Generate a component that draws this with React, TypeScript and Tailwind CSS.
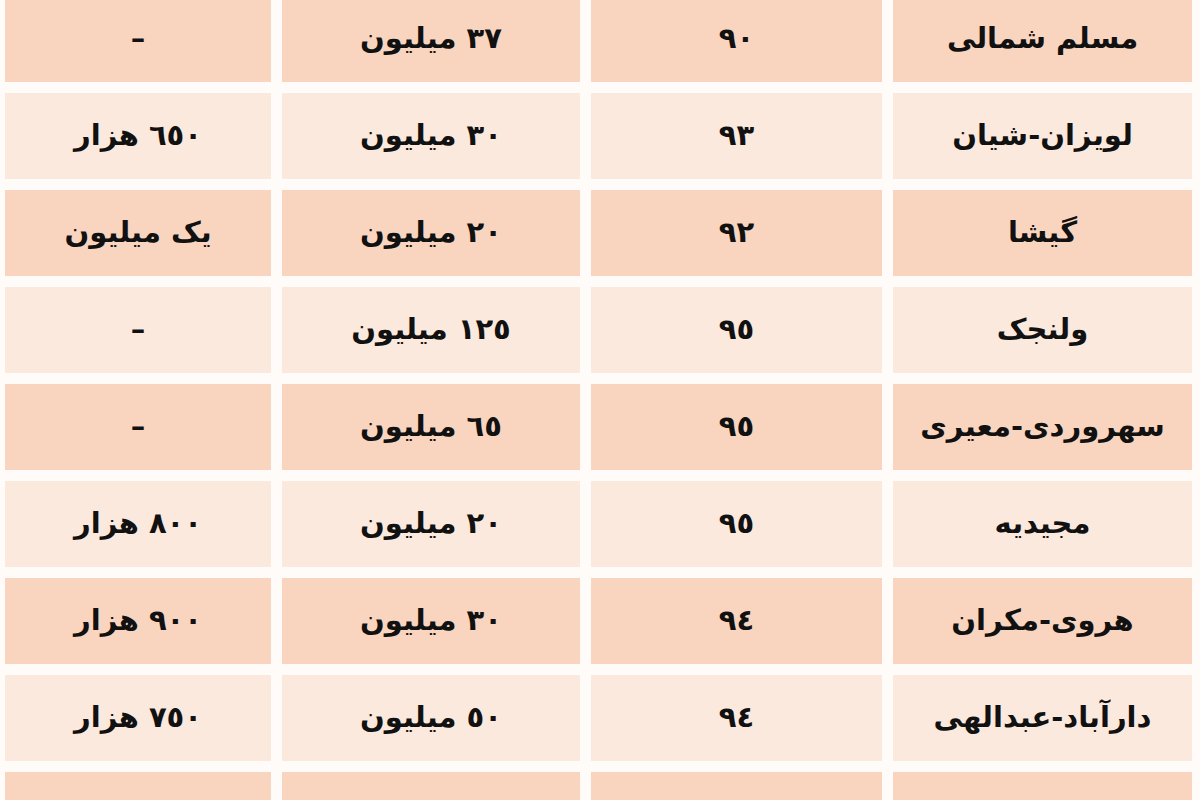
const rows: [string, string, string, string][] = [
  ["مسلم شمالی", "٩٠", "٣٧ میلیون", "–"],
  ["لویزان-شیان", "٩٣", "٣٠ میلیون", "٦٥٠ هزار"],
  ["گیشا", "٩٢", "٢٠ میلیون", "یک میلیون"],
  ["ولنجک", "٩٥", "١٢٥ میلیون", "–"],
  ["سهروردی-معیری", "٩٥", "٦٥ میلیون", "–"],
  ["مجیدیه", "٩٥", "٢٠ میلیون", "٨٠٠ هزار"],
  ["هروی-مکران", "٩٤", "٣٠ میلیون", "٩٠٠ هزار"],
  ["دارآباد-عبدالهی", "٩٤", "٥٠ میلیون", "٧٥٠ هزار"],
  ["نیاوران", "٩٥", "٤٠ میلیون", "–"],
];

const App = () => {
  return (
    <div className="h-[800px] w-[1200px] overflow-hidden bg-[#fffbf8]">
      <div
        dir="rtl"
        className="-mt-[4px] grid grid-cols-[299px_291px_298px_266px] gap-x-[11px] gap-y-[11px] pr-[8px] pl-[5px] text-[29px] font-bold text-[#111] [font-family:'DejaVu_Sans',sans-serif]"
      >
        {rows.map((row, i) =>
          row.map((cell, j) => (
            <div
              key={`${i}-${j}`}
              className={`flex h-[86px] items-center justify-center ${
                i % 2 === 0 ? "bg-[#f9d5c0]" : "bg-[#fce9de]"
              }`}
            >
              {cell}
            </div>
          ))
        )}
      </div>
    </div>
  );
};

export default App;
